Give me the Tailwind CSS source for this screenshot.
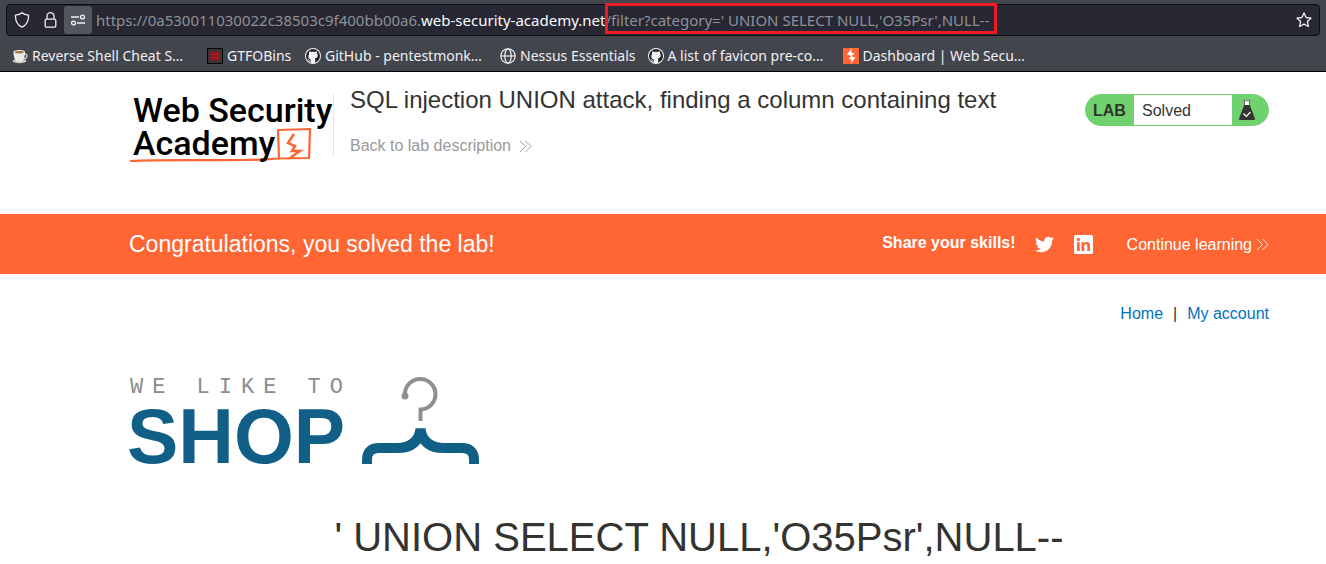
<!DOCTYPE html>
<html lang="en">
<head>
<meta charset="utf-8">
<meta name="viewport" content="width=device-width, initial-scale=1">
<title>SQL injection UNION attack, finding a column containing text</title>
<script src="https://cdn.jsdelivr.net/npm/@tailwindcss/browser@4"></script>
</head>
<body class="bg-white font-['Liberation_Sans',Arial,sans-serif] text-[#333332]">
<svg class="hidden" aria-hidden="true">
  <symbol id="github" viewBox="0 0 16 16">
    <circle cx="8" cy="8" r="8" fill="#f4f4f5"/>
    <circle cx="8" cy="8" r="7" fill="#24242c"/>
    <path fill="#f4f4f5" d="M4.2 3.2c.8 0 1.500.3 2 .8a8 8 0 0 1 3.600 0c.5-.5 1.200-.8 2-.8.3.8.3 1.500.1 2 .6.6.8 1.300.8 2 0 2.200-1.300 3-3 3.200.4.4.5.9.5 1.500V15H5.800v-1.600c-1.600.3-2-.6-2.300-1.200-.2-.4-.5-.6-.8-.8 1-.2 1.400.6 1.900 1.100.3.3.8.3 1.200.1 0-.4.2-.8.5-1.100-1.700-.2-3-1.100-3-3.300 0-.8.3-1.500.8-2-.2-.6-.2-1.300.1-2z"/>
  </symbol>
  <symbol id="chevrons" viewBox="0 0 14 14">
    <path d="M1 1l6 6-6 6M7 1l6 6-6 6" fill="none" stroke="currentColor" stroke-width="1"/>
  </symbol>
</svg>

<div class="border-b border-black bg-[#43454d] px-[6px] pt-1 font-['Noto_Sans',sans-serif] text-[#f0f0f2]">
  <div class="flex h-8 items-center rounded border border-[#0c0c0d] bg-[#272833] pr-[7px]">
    <button aria-label="Tracking protection" class="flex h-7 w-[30px] items-center justify-center">
      <svg class="h-4 w-4" viewBox="0 0 16 16" fill="none" stroke="currentColor" stroke-width="1.300" stroke-linejoin="round"><path d="M8 .8c1.700 1.500 4 2.100 6.500 2.300.3 5.200-1.800 9.700-6.500 12.100C3.300 12.800 1.200 8.300 1.500 3.100 4 2.900 6.300 2.300 8 .8z"/></svg>
    </button>
    <button aria-label="Site security" class="flex h-7 w-[27px] items-center justify-center">
      <svg class="h-4 w-4" viewBox="0 0 16 16" fill="none" stroke="currentColor" stroke-width="1.300"><rect x="2.200" y="7.200" width="10.600" height="8" rx="1.300"/><path d="M4 7V4.200a3.500 3.500 0 0 1 7 0V7"/></svg>
    </button>
    <button aria-label="Site permissions" class="flex h-7 w-7 items-center justify-center rounded-[3px] bg-[#54565e]">
      <svg class="h-4 w-4" viewBox="0 0 16 16" fill="none" stroke="currentColor" stroke-width="1.400"><path d="M1 5h8M7 11h8"/><circle cx="12.500" cy="5" r="1.900"/><circle cx="3.500" cy="11" r="1.900"/></svg>
    </button>
    <div role="textbox" aria-label="Address" contenteditable="true" spellcheck="false" class="ml-1 text-[15px] leading-5 whitespace-nowrap text-[#8f9097]">https://0a530011030022c38503c9f400bb00a6.<span class="text-[#fbfbfe]">web-security-academy.net</span><span class="relative">/filter?category=' UNION SELECT NULL,'O35Psr',NULL--<span class="pointer-events-none absolute -top-[7px] -right-[8px] -bottom-[4px] left-0 border-3 border-[#ed1c24]"></span></span></div>
    <button aria-label="Bookmark this page" class="ml-auto">
      <svg class="h-4 w-4" viewBox="0 0 16 16" fill="none" stroke="currentColor" stroke-width="1.300" stroke-linejoin="round"><path d="M8 .9l2.100 4.600 5 .6-3.700 3.400 1 5L8 12.100l-4.400 2.400 1-5L.9 6.100l5-.6z"/></svg>
    </button>
  </div>
  <nav aria-label="Bookmarks" class="flex h-[35px] items-center gap-3 px-[6px] pt-1 text-[14px] leading-5 whitespace-nowrap">
    <a href="#" class="flex items-center gap-1">
      <svg class="h-4 w-4" viewBox="0 0 16 16"><ellipse cx="7.500" cy="13" rx="7" ry="2.200" fill="#c9c9c7"/><path d="M12 6c4-1 4 4.500-.5 5" fill="none" stroke="#d5d5d3" stroke-width="1.300"/><path d="M1.500 4h11.500c0 5-1.500 9-3.500 9.500H5.200C3 13 1.500 9 1.500 4z" fill="#ececea"/><ellipse cx="7.200" cy="4" rx="5.800" ry="2" fill="#f6f6f4"/><ellipse cx="7.200" cy="4.200" rx="4.600" ry="1.200" fill="#a3753e"/></svg>
      <span class="w-[163px]">Reverse Shell Cheat S…</span>
    </a>
    <a href="#" class="flex items-center gap-1">
      <svg class="h-4 w-4" viewBox="0 0 16 16"><path d="M.5.5h15v15H.5z" fill="#35363d" stroke="#000"/><path d="M6 3v10M10 3v10M3 6h10M3 10h10" stroke="#c9080b" stroke-width="1.600"/></svg>
      <span class="w-[66px]">GTFOBins</span>
    </a>
    <a href="#" class="flex items-center gap-1">
      <svg class="h-4 w-4"><use href="#github"/></svg>
      <span class="w-[163px]">GitHub - pentestmonk…</span>
    </a>
    <a href="#" class="flex items-center gap-1">
      <svg class="h-4 w-4" viewBox="0 0 16 16" fill="none" stroke="currentColor" stroke-width="1.200"><circle cx="8" cy="8" r="7.200"/><ellipse cx="8" cy="8" rx="3.200" ry="7.200"/><path d="M1 8h14"/></svg>
      <span>Nessus Essentials</span>
    </a>
    <a href="#" class="flex items-center gap-1">
      <svg class="h-4 w-4"><use href="#github"/></svg>
      <span class="w-[163px]">A list of favicon pre-co…</span>
    </a>
    <a href="#" class="flex items-center gap-1">
      <svg class="h-4 w-4" viewBox="0 0 16 16"><path d="M0 0h16v16H0z" fill="#ff6633"/><path d="M9 0L4 6.600l4.500 1.300-3 2.600 3.300 1.200L7.400 16l5-6.300-4-1.500 3.200-2.600L8 4.300z" fill="#fff"/></svg>
      <span>Dashboard | Web Secu…</span>
    </a>
  </nav>
</div>

<header class="flex h-[142px] items-start pr-[57px] pl-[129px]">
  <a href="#" aria-label="Web Security Academy" class="mt-[22px] h-[62px] shrink-0 border-r border-[#e5e5e5]">
    <svg class="h-[70px] w-[204px] overflow-visible" viewBox="0 0 204 70">
      <g fill="none" stroke="#ff6633" stroke-linejoin="round">
        <path d="M1 67c30-1.500 70-.5 113-1 15 0 25-1 36-1.500L149 36l32-1-1 29-30 .5" stroke-width="2.200"/>
        <path d="M165 40l-6 9 7 3-3 5h8l-10 7" stroke-width="2.500" stroke-linejoin="miter"/>
      </g>
      <g fill="#000" font-family="Roboto, sans-serif" font-weight="500" font-size="34">
        <text x="4" y="28">Web Security</text>
        <text x="4" y="61">Academy</text>
      </g>
    </svg>
  </a>
  <div class="ml-4 flex-1 pt-3">
    <h2 class="text-[24px] leading-8">SQL injection UNION attack, finding a column containing text</h2>
    <a href="#" class="mt-5 inline-flex items-center gap-2 text-base leading-5 text-[#999]">Back to lab description<svg class="h-[13px] w-[13px]"><use href="#chevrons"/></svg></a>
  </div>
  <div class="mt-[22px] flex h-8 w-[184px] shrink-0 items-stretch overflow-hidden rounded-full border border-[#70d26e] bg-[#70d26e] text-base leading-8">
    <span class="w-12 pl-[7px] font-bold">LAB</span>
    <span class="flex-1 bg-white pl-2">Solved</span>
    <svg class="mt-1 mr-[13px] ml-[7px] h-[22px] w-4" viewBox="0 0 16 22"><path d="M5 1h6v6H5z" fill="#fff"/><path d="M4 1.500h8" stroke="#888" stroke-width="1.500"/><path d="M5.500 2v4M10.500 2v4" stroke="#666"/><path d="M5.200 6h5.600L16 19.500q.3 1.500-1.200 1.500H1.200Q-.3 21 0 19.500z" fill="#333332"/><path d="M4.500 14.500l2.800 2.800L11.500 13" fill="none" stroke="#fff" stroke-width="1.200"/></svg>
  </div>
</header>

<section class="flex h-[60px] items-center bg-[#ff6633] pr-[57px] pl-[129px] text-white">
  <p class="text-[23px] leading-8">Congratulations, you solved the lab!</p>
  <span class="mr-[19px] mb-[3px] ml-auto text-base leading-5 font-bold">Share your skills!</span>
  <a href="#" aria-label="Twitter" class="mr-5"><svg class="h-[19px] w-[19px]" viewBox="0 1 24 22" fill="#fff"><path d="M23.950 4.570a10 10 0 0 1-2.820.77 4.960 4.960 0 0 0 2.160-2.720c-.95.550-2 .95-3.130 1.190a4.920 4.920 0 0 0-8.380 4.480C7.690 8.090 4.070 6.130 1.640 3.160a4.930 4.930 0 0 0 1.520 6.570 4.900 4.900 0 0 1-2.230-.61v.06c0 2.390 1.700 4.380 3.950 4.830a5 5 0 0 1-2.210.08 4.940 4.940 0 0 0 4.600 3.420A9.870 9.870 0 0 1 0 19.540a14 14 0 0 0 7.550 2.210c9.050 0 14-7.500 14-13.980l-.02-.63a9.940 9.940 0 0 0 2.420-2.570z"/></svg></a>
  <a href="#" aria-label="LinkedIn" class="mr-[34px]"><svg class="h-[19px] w-[19px]" viewBox="0 0 19 19"><rect width="19" height="19" rx="1.500" fill="#fff"/><path fill="#ff6633" d="M3 7.200h2.700V16H3zM7.500 7.200h2.600v1.200c.5-.9 1.500-1.400 2.700-1.400 2.500 0 3.200 1.600 3.200 4V16h-2.700v-4.500c0-1.200-.2-2.200-1.500-2.200s-1.600 1-1.600 2.200V16H7.500z"/><circle cx="4.350" cy="4.400" r="1.600" fill="#ff6633"/></svg></a>
  <a href="#" class="flex items-center gap-1 pt-px text-base leading-5">Continue learning<svg class="h-[13px] w-[13px]"><use href="#chevrons"/></svg></a>
</section>

<main class="pr-[57px] pl-[129px]">
  <nav aria-label="Account" class="flex justify-end gap-[10px] pt-[30px] text-base leading-5">
    <a href="#" class="text-[#0071bc]">Home</a><span>|</span><a href="#" class="text-[#0071bc]">My account</a>
  </nav>
  <svg class="mt-[52px] h-[90px] w-[352px] overflow-visible" viewBox="0 0 352 90" role="img" aria-label="We like to shop">
    <text x="1" y="17" fill="#8c8c8c" font-family="Liberation Mono, monospace" font-size="22" class="tracking-[9px]">WE LIKE TO</text>
    <text x="-2" y="87" fill="#115f86" font-family="Liberation Sans, Arial, sans-serif" font-weight="700" font-size="77">SHOP</text>
    <path d="M276 20a15.300 15.300 0 1 1 15.500 13.500V45" fill="none" stroke="#8f8f91" stroke-width="4"/>
    <circle cx="276" cy="20" r="3.500" fill="#8f8f91"/>
    <path d="M238 88v-4q0-12 12-12h18q21 0 23.500-19Q294 72 315 72h18q12 0 12 12v4" fill="none" stroke="#115f86" stroke-width="10"/>
  </svg>
  <h1 class="mt-[41px] text-center text-[40px] leading-[60px]">' UNION SELECT NULL,'O35Psr',NULL--</h1>
</main>
</body>
</html>
